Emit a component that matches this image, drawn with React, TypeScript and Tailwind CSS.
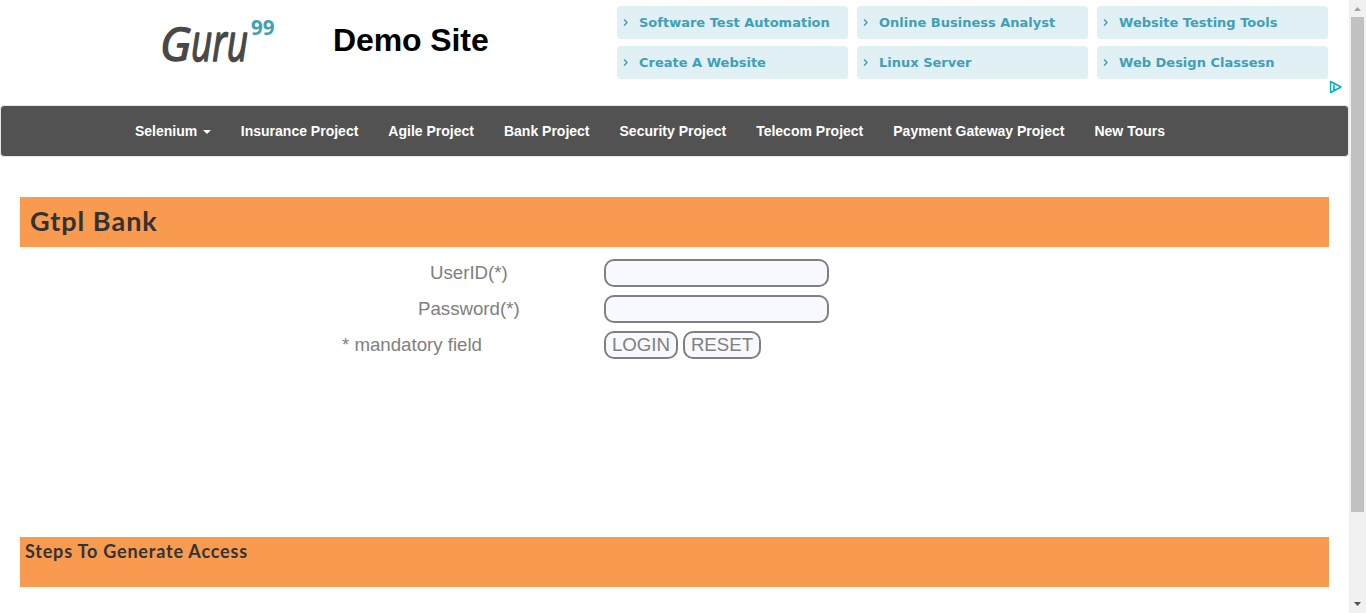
import React from "react";

const ads = [
  "Software Test Automation",
  "Online Business Analyst",
  "Website Testing Tools",
  "Create A Website",
  "Linux Server",
  "Web Design Classesn",
];

const links = [
  "Insurance Project",
  "Agile Project",
  "Bank Project",
  "Security Project",
  "Telecom Project",
  "Payment Gateway Project",
  "New Tours",
];

function Logo() {
  return (
    <svg width="120" height="80" viewBox="0 0 120 80" className="shrink-0" aria-label="Guru99">
      <g fill="#484848" stroke="#484848" strokeWidth="1.5" strokeLinejoin="round" fontFamily="'Open Sans', sans-serif" fontStyle="italic">
        <text x="2" y="61" fontSize="46" textLength="31" lengthAdjust="spacingAndGlyphs">
          G
        </text>
        <text x="33" y="61" fontSize="53" textLength="57" lengthAdjust="spacingAndGlyphs">
          uru
        </text>
      </g>
      <text x="93" y="35" fill="#41a0b5" fontFamily="'Open Sans', sans-serif" fontWeight="700" fontSize="21" textLength="23.5" lengthAdjust="spacingAndGlyphs">
        99
      </text>
    </svg>
  );
}

function AdGrid() {
  return (
    <div className="grid grid-cols-[231px_231px_231px] grid-rows-[33px_33px] gap-x-[9px] gap-y-[7px]">
      {ads.map((label) => (
        <a key={label} className="flex items-center rounded bg-[#e0f0f5] pl-[6px] font-['DejaVu_Sans',sans-serif] text-[13px] font-bold text-[#429fb5]">
          <svg width="6" height="9" viewBox="0 0 6 9" fill="none" stroke="#429fb5" strokeWidth="1.4" className="mr-[10px] shrink-0">
            <path d="M1 1.5 4 4.5 1 7.5" />
          </svg>
          <span className="whitespace-nowrap">{label}</span>
        </a>
      ))}
    </div>
  );
}

function Scrollbar() {
  return (
    <aside className="flex h-full w-[17px] shrink-0 flex-col items-center bg-[#f1f1f1]">
      <svg width="17" height="17" className="shrink-0" fill="#a3a3a3">
        <path d="M5 11h7L8.5 7z" />
      </svg>
      <div className="h-[495px] w-[13px] bg-[#c1c1c1]" />
      <svg width="17" height="17" className="mt-auto shrink-0" fill="#505050">
        <path d="M5 6h7L8.5 10z" />
      </svg>
    </aside>
  );
}

export default function App() {
  return (
    <div className="flex h-[613px] w-[1366px] overflow-hidden bg-white font-['Liberation_Sans',Arial,sans-serif]">
      <main className="flex w-[1349px] flex-col">
        <header className="flex h-[105px] shrink-0 items-start">
          <div className="flex w-[617px] pl-[158px]">
            <Logo />
            <h1 className="ml-[55px] mt-[22px] whitespace-nowrap text-[32px] font-bold leading-9 tracking-[-0.1px] text-black">Demo Site</h1>
          </div>
          <div className="pt-[6px]">
            <AdGrid />
          </div>
          <svg width="14" height="14" viewBox="0 0 14 14" className="mt-20 shrink-0" fill="none" stroke="#00aecd" strokeWidth="1.5">
            <path d="M2.6 1.5v11L13 7z" strokeLinejoin="round" />
            <path d="M6 4.2v1.2M5 6.5h1v3.2M5 9.6h2" />
          </svg>
        </header>

        <nav className="flex h-[52px] shrink-0 items-center rounded border border-[#e7e7e7] bg-[#525252] pl-[134px] text-[14px] font-bold text-white">
          <a className="mr-[29.6px] flex items-center">
            Selenium
            <span className="ml-[6px] mt-[1px] border-x-4 border-t-4 border-x-transparent border-t-white" />
          </a>
          <div className="flex gap-[30px]">
            {links.map((link) => (
              <a key={link} className="whitespace-nowrap">{link}</a>
            ))}
          </div>
        </nav>

        <section className="flex flex-1 flex-col px-5 pt-10">
          <h2 className="flex h-[50px] items-center bg-[#f89a50] pb-[2px] pl-[10px] font-['Lato',sans-serif] text-[27px] font-bold text-[#333]">
            <span className="tracking-[1px]">Gtpl Bank</span>
          </h2>
          <form className="mt-[12px] grid grid-cols-[252px_auto] gap-y-2 pl-[322px] text-[18.67px] text-[#808080]">
            <label className="pl-[88px] leading-[27px]">UserID(*)</label>
            <input className="ml-[10px] h-7 w-[225px] rounded-[10px] border-2 border-[#808080] bg-[#f8f8ff]" />
            <label className="pl-[76px] leading-[27px]">Password(*)</label>
            <input type="password" className="ml-[10px] h-7 w-[225px] rounded-[10px] border-2 border-[#808080] bg-[#f8f8ff]" />
            <span className="leading-[27px]">* mandatory field</span>
            <div className="ml-[10px] flex gap-[5px] leading-[22px]">
              <button type="button" className="h-7 w-[74px] rounded-[10px] border-2 border-[#808080] bg-[#f8f8ff]">LOGIN</button>
              <button type="button" className="h-7 w-[78px] rounded-[10px] border-2 border-[#808080] bg-[#f8f8ff]">RESET</button>
            </div>
          </form>
          <h3 className="mt-[178px] h-[50px] bg-[#f89a50] pl-[5px] pt-[4px] font-['Lato',sans-serif] text-[18px] font-bold leading-[21px] text-[#333]">
            <span className="tracking-[0.8px]">Steps To Generate Access</span>
          </h3>
        </section>
      </main>
      <Scrollbar />
    </div>
  );
}
